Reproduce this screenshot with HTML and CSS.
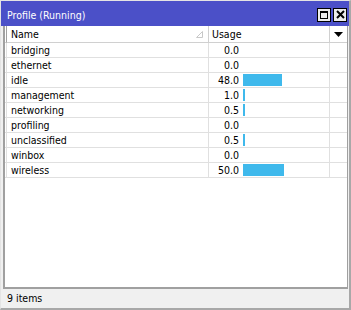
FILE: index.html
```html
<!DOCTYPE html>
<html lang="en">
<head>
  <meta charset="UTF-8" />
  <meta name="viewport" content="width=device-width, initial-scale=1.0">
  <title>Profile (Running)</title>

  <link rel="stylesheet" href="styles.css">
</head>
<body>
  <div class="window">
    <div class="titlebar">
      <span class="title">Profile (Running)</span>
      <div class="title-buttons">
        <span class="tbtn"><span class="max-box"></span></span>
        <span class="tbtn">
          <svg width="9" height="9" viewBox="0 0 9 9"><path d="M1 1 L8 8 M8 1 L1 8" stroke="#000" stroke-width="2"/></svg>
        </span>
      </div>
    </div>

    <div class="list">
      <div class="row head">
        <div class="cell flag"></div>
        <div class="cell name">Name
          <svg class="sort" width="7" height="7" viewBox="0 0 7 7"><path d="M0.5 6.5 L6.5 6.5 L6.5 0.5 Z" fill="none" stroke="#c8c8c8" stroke-width="1"/></svg>
        </div>
        <div class="cell usage">Usage</div>
        <div class="cell menu">
          <svg width="9" height="5" viewBox="0 0 9 5"><path d="M0 0 L9 0 L4.5 5 Z" fill="#000"/></svg>
        </div>
      </div>

      <div class="row"><div class="cell flag"></div><div class="cell name">bridging</div><div class="cell usage"><span class="num">0.0</span></div><div class="cell menu"></div></div>
      <div class="row"><div class="cell flag"></div><div class="cell name">ethernet</div><div class="cell usage"><span class="num">0.0</span></div><div class="cell menu"></div></div>
      <div class="row"><div class="cell flag"></div><div class="cell name">idle</div><div class="cell usage"><span class="num">48.0</span><span class="bar" style="width: 39px"></span></div><div class="cell menu"></div></div>
      <div class="row"><div class="cell flag"></div><div class="cell name">management</div><div class="cell usage"><span class="num">1.0</span><span class="bar" style="width: 2px"></span></div><div class="cell menu"></div></div>
      <div class="row"><div class="cell flag"></div><div class="cell name">networking</div><div class="cell usage"><span class="num">0.5</span><span class="bar" style="width: 2px"></span></div><div class="cell menu"></div></div>
      <div class="row"><div class="cell flag"></div><div class="cell name">profiling</div><div class="cell usage"><span class="num">0.0</span></div><div class="cell menu"></div></div>
      <div class="row"><div class="cell flag"></div><div class="cell name">unclassified</div><div class="cell usage"><span class="num">0.5</span><span class="bar" style="width: 2px"></span></div><div class="cell menu"></div></div>
      <div class="row"><div class="cell flag"></div><div class="cell name">winbox</div><div class="cell usage"><span class="num">0.0</span></div><div class="cell menu"></div></div>
      <div class="row"><div class="cell flag"></div><div class="cell name">wireless</div><div class="cell usage"><span class="num">50.0</span><span class="bar" style="width: 41px"></span></div><div class="cell menu"></div></div>
    </div>

    <div class="status">9 items</div>
  </div>
</body>
</html>
```

FILE: styles.css
```css
body {
  margin: 0;
  font-family: "DejaVu Sans Condensed", "DejaVu Sans", sans-serif;
  font-stretch: condensed;
  font-size: 10.5px;
  color: #000;
}
.window {
  width: 351px;
  height: 310px;
  box-sizing: border-box;
  background-color: #f0f0f0;
  border-top: 1px solid #e4e4e4;
  border-left: 1px solid #e4e4e4;
  border-right: 2px solid #a8a8a8;
  border-bottom: 2px solid #a8a8a8;
  display: flex;
  flex-direction: column;
}
.titlebar {
  height: 25px;
  background-color: #4b50c8;
  color: white;
  display: flex;
  align-items: center;
  padding-left: 6px;
  padding-right: 2px;
}
.title { flex: 1; font-size: 10.5px; padding-top: 3px; }
.title-buttons { display: flex; gap: 2px; padding-top: 2px; }
.tbtn {
  width: 14px;
  height: 14px;
  box-sizing: border-box;
  background-color: #ececec;
  border: 1px solid #000;
  display: flex;
  justify-content: center;
  align-items: center;
}
.max-box {
  width: 8px;
  height: 8px;
  border: 1px solid #000;
  border-top-width: 2px;
  box-sizing: border-box;
}
.list {
  flex: 1;
  margin-left: 2px;
  margin-right: 1px;
  background-color: white;
  border-left: 2px solid #a0a0a0;
  border-right: 1px solid #a0a0a0;
  border-bottom: 2px solid #a0a0a0;
}
.row { display: flex; height: 15px; }
.cell {
  box-sizing: border-box;
  border-right: 1px solid #e0e0e0;
  border-bottom: 1px solid #e0e0e0;
  line-height: 14px;
  white-space: nowrap;
}
.flag { width: 2px; }
.name { width: 202px; padding-left: 4px; }
.usage { width: 121px; display: flex; align-items: center; }
.menu { flex: 1; border-right: none; display: flex; justify-content: center; align-items: center; }
.head { height: 17px; }
.head .cell { line-height: 16px; border-bottom: 1px solid #d0d0d0; border-right: 1px solid #d0d0d0; }
.head .flag { border-right: 1px solid #a0a0a0; }
.head .name { display: flex; justify-content: space-between; align-items: center; padding-right: 5px; }
.head .usage { padding-left: 3px; }
.head .menu { border-right: none; }
.num { width: 30px; text-align: right; }
.bar { height: 12px; margin-left: 4px; background-color: #3fb9ec; }
.status {
  height: 19px;
  line-height: 19px;
  padding-left: 6px;
}
```
